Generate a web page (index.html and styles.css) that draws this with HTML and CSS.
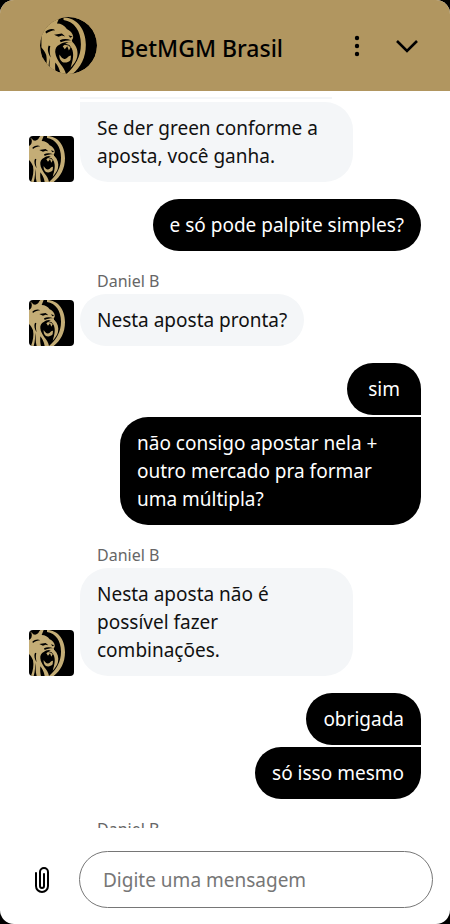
FILE: index.html
```html
<!DOCTYPE html>
<html lang="pt-BR">
<head>
  <meta charset="UTF-8">
  <meta name="viewport" content="width=device-width, initial-scale=1.0">
  <title>BetMGM Brasil</title>
  <link rel="stylesheet" href="styles.css">
</head>
<body>
  <!-- Lion shared by the header logo and the avatars -->
  <svg class="sprite" aria-hidden="true">
    <symbol id="lion" viewBox="0 0 135 138">
      <path d="M54 0C86 0 108 28 108 66C108 98 95 122 74 138H60C82 118 96 96 96 65C96 32 80 10 54 6Z"/>
      <path d="M0 30C6 27 10 20 8 11L3 4L15 14C22 13 29 8 34 0L44 0L38 15C48 15 57 20 62 28C70 32 76 38 77 45C78 50 76 53 74 55L76 62L66 61C57 59 50 62 44 66C37 69 33 76 34 85C35 95 40 103 46 112C53 120 58 128 60 138H47C45 126 40 116 34 109C33 121 34 131 36 138H23C19 123 20 109 21 98C17 109 19 124 14 138H6C12 122 15 106 12 91C9 83 5 77 0 72Z"/>
      <path d="M76 60C86 70 90 82 87 96C85 106 78 114 71 122C77 103 80 88 74 75L68 67L58 64L66 60Z"/>
      <path d="M44 90C49 98 53 102 59 100C64 98 66 92 72 92L71 103C66 109 57 111 51 108C46 104 43 99 44 90Z"/>
      <path d="M52 70L57 77L63 70L67 80L71 73L66 68L57 66Z"/>
      <g class="ink">
        <path d="M10 35C18 28 27 26 34 31C26 31 19 34 12 39Z"/>
        <path d="M31 42L50 39L58 46L50 44L42 47Z"/>
        <path d="M66 43L76 46L70 49Z"/>
        <path d="M45 55C53 51 63 51 72 55C62 55 54 57 47 60Z"/>
        <path d="M0 82C7 96 7 113 0 131Z"/>
        <path d="M18 68C14 77 17 88 23 97C20 86 20 77 22 70Z"/>
        <path d="M16 9L30 2L28 9L20 14Z"/>
      </g>
    </symbol>
  </svg>

  <div class="chat">
    <header class="chat-header">
      <svg class="logo" viewBox="-3 -1 138 138" aria-hidden="true">
        <clipPath id="disc"><circle cx="66" cy="68" r="69"/></clipPath>
        <g clip-path="url(#disc)">
          <circle class="ink" cx="66" cy="68" r="69"/>
          <use href="#lion" width="135" height="138"/>
        </g>
      </svg>
      <h1>BetMGM Brasil</h1>
      <button class="icon-button" type="button" aria-label="Mais opções">
        <svg width="24" height="24" viewBox="0 0 24 24">
          <circle cx="12" cy="4" r="2.2"/>
          <circle cx="12" cy="12" r="2.2"/>
          <circle cx="12" cy="20" r="2.2"/>
        </svg>
      </button>
      <button class="icon-button" type="button" aria-label="Minimizar">
        <svg width="24" height="24" viewBox="0 0 24 24">
          <path class="line" d="M2 7l10 10L22 7"/>
        </svg>
      </button>
    </header>

    <main class="messages">
      <div class="bubble-end"></div>
      <div class="row">
        <svg class="avatar" viewBox="0 0 135 138" aria-hidden="true"><use href="#lion"/></svg>
        <p class="bubble received joined-top">Se der green conforme a aposta, você ganha.</p>
      </div>

      <div class="group">
        <p class="bubble sent">e só pode palpite simples?</p>
      </div>

      <div class="sender">Daniel B</div>
      <div class="row">
        <svg class="avatar" viewBox="0 0 135 138" aria-hidden="true"><use href="#lion"/></svg>
        <p class="bubble received">Nesta aposta pronta?</p>
      </div>

      <div class="group">
        <p class="bubble sent short joined-bottom">sim</p>
        <p class="bubble sent joined-top">não consigo apostar nela + outro mercado pra formar uma múltipla?</p>
      </div>

      <div class="sender">Daniel B</div>
      <div class="row">
        <svg class="avatar" viewBox="0 0 135 138" aria-hidden="true"><use href="#lion"/></svg>
        <p class="bubble received">Nesta aposta não é possível fazer combinações.</p>
      </div>

      <div class="group">
        <p class="bubble sent joined-bottom">obrigada</p>
        <p class="bubble sent joined-top">só isso mesmo</p>
      </div>

      <div class="sender">Daniel B</div>
    </main>

    <form class="composer">
      <button class="icon-button" type="button" aria-label="Anexar arquivo">
        <svg width="16" height="28" viewBox="0 0 16 28">
          <path class="clip" d="M2 7v13a6 6 0 0 0 12 0V6a4 4 0 0 0-8 0v14a2 2 0 0 0 4 0V8"/>
        </svg>
      </button>
      <input type="text" placeholder="Digite uma mensagem" aria-label="Digite uma mensagem">
    </form>
  </div>
</body>
</html>
```

FILE: styles.css
```css
* {
  box-sizing: border-box;
}

body {
  margin: 0;
  background-color: #000;
  color: #111;
  font-family: "Noto Sans", "Open Sans", sans-serif;
  font-size: 19px;
  line-height: 28px;
}

h1,
p {
  margin: 0;
}

.sprite {
  position: absolute;
  width: 0;
  height: 0;
}

.ink {
  fill: #000;
}

.chat {
  display: flex;
  flex-direction: column;
  height: 100vh;
  overflow: hidden;
  background-color: #fff;
  border-radius: 14px;
}

.chat-header {
  display: flex;
  align-items: center;
  flex-shrink: 0;
  height: 91px;
  padding: 0 30px 0 40px;
  background-color: #b19660;
}

.logo {
  width: 57px;
  height: 57px;
  margin-right: 23px;
  fill: #bfa468;
}

.chat-header h1 {
  flex: 1;
  padding-top: 4px;
  color: #000;
  font-size: 23px;
  font-weight: 500;
}

.icon-button {
  display: flex;
  align-items: center;
  justify-content: center;
  padding: 0;
  border: none;
  background: none;
  cursor: pointer;
}

.chat-header .icon-button {
  width: 26px;
  height: 40px;
  margin-left: 24px;
}

.line {
  fill: none;
  stroke: #000;
  stroke-width: 2.6;
}

.messages {
  flex: 1;
  min-height: 0;
  margin-top: 6px;
  padding: 0 29px;
  overflow: hidden;
}

.bubble-end {
  width: 252px;
  height: 2px;
  margin: 0 0 3px 51px;
  background-color: #f4f6f8;
}

.row {
  display: flex;
  align-items: flex-end;
  gap: 6px;
}

.avatar {
  flex-shrink: 0;
  width: 45px;
  height: 46px;
  border-radius: 4px;
  background-color: #000;
  fill: #c4ad76;
}

.group {
  display: flex;
  flex-direction: column;
  align-items: flex-end;
  gap: 2px;
  margin-top: 17px;
}

.bubble {
  padding: 12px 17px;
  border-radius: 28px;
}

.received {
  max-width: 273px;
  background-color: #f4f6f8;
}

.sent {
  max-width: 301px;
  background-color: #000;
  color: #fff;
}

.short {
  padding: 12px 21px;
}

.received.joined-top {
  border-top-left-radius: 0;
}

.sent.joined-top {
  border-top-right-radius: 0;
}

.sent.joined-bottom {
  border-bottom-right-radius: 0;
}

.sender {
  margin-top: 17px;
  padding-left: 68px;
  color: #666;
  font-size: 16px;
  line-height: 26px;
}

.composer {
  display: flex;
  align-items: center;
  flex-shrink: 0;
  gap: 29px;
  padding: 23px 17px 16px 34px;
}

.clip {
  fill: none;
  stroke: #000;
  stroke-width: 2;
  stroke-linecap: round;
}

.composer input {
  flex: 1;
  min-width: 0;
  height: 57px;
  padding: 0 23px;
  border: 1px solid #767676;
  border-radius: 29px;
  background-color: #fff;
  color: #111;
  font: inherit;
}

.composer input::placeholder {
  color: #767676;
}
```
